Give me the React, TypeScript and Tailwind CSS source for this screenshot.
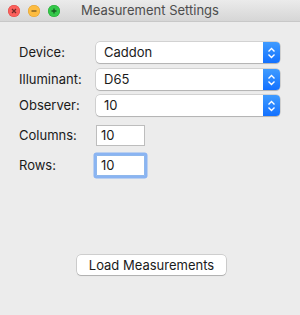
import React from 'react';

const font = { fontFamily: 'Inter, "Liberation Sans", Arial, sans-serif' };

const Stepper = () => (
  <div className="flex h-full w-[17px] shrink-0 items-center justify-center rounded-r-[4px] bg-gradient-to-b from-[#3f9bff] to-[#1270ff]">
    <svg width="9" height="12" viewBox="0 0 9 12" fill="none" stroke="#fff" strokeWidth="1.4">
      <path d="M1.5 4.5 L4.5 1.5 L7.5 4.5" />
      <path d="M1.5 7.5 L4.5 10.5 L7.5 7.5" />
    </svg>
  </div>
);

const Select = ({ value }: { value: string }) => (
  <div className="flex h-[21px] w-[184px] items-stretch rounded-[4px] bg-white shadow-[0_0_0_0.5px_rgba(0,0,0,0.22),0_1px_1px_rgba(0,0,0,0.15)]">
    <span className="flex-1 pl-[8px] text-[13px] leading-[21px] text-[#1a1a1a]">{value}</span>
    <Stepper />
  </div>
);

const Light = ({ color, border, sign }: { color: string; border: string; sign: string }) => (
  <div
    className="flex h-[12px] w-[12px] items-center justify-center rounded-full"
    style={{ background: color, boxShadow: `inset 0 0 0 0.5px ${border}` }}
  >
    <svg width="8" height="8" viewBox="0 0 8 8" stroke="rgba(0,0,0,0.55)" strokeWidth="1.3">
      {sign === 'x' && <path d="M2 2 L6 6 M6 2 L2 6" />}
      {sign === '-' && <path d="M1.5 4 L6.5 4" />}
      {sign === '+' && <path d="M1.5 4 L6.5 4 M4 1.5 L4 6.5" />}
    </svg>
  </div>
);

export default function App() {
  return (
    <div className="flex h-[315px] w-[300px] flex-col bg-[#ececec]" style={font}>
      <div className="relative flex h-[22px] shrink-0 items-center border-b border-[#c8c8c8] bg-gradient-to-b from-[#ebebeb] to-[#d6d6d6]">
        <div className="absolute left-[8px] top-[5px] flex gap-[8px]">
          <Light color="#fc605c" border="#de4a45" sign="x" />
          <Light color="#fdbc40" border="#dea034" sign="-" />
          <Light color="#34c84a" border="#27aa35" sign="+" />
        </div>
        <div className="w-full text-center text-[13px] text-[#4d4d4d]">Measurement Settings</div>
      </div>

      <div className="flex flex-col pl-[19px] pt-[20px] text-[13px] text-[#1a1a1a]">
        <div className="flex items-center">
          <span className="w-[77px]">Device:</span>
          <Select value="Caddon" />
        </div>
        <div className="mt-[6px] flex items-center">
          <span className="w-[77px]">Illuminant:</span>
          <Select value="D65" />
        </div>
        <div className="mt-[5px] flex items-center">
          <span className="w-[77px]">Observer:</span>
          <Select value="10" />
        </div>
        <div className="mt-[9px] flex items-center">
          <span className="w-[77px]">Columns:</span>
          <div className="h-[21px] w-[49px] border border-[#bdbdbd] bg-white pl-[4px] text-[13px] leading-[19px]">10</div>
        </div>
        <div className="mt-[9px] flex items-center">
          <span className="w-[77px]">Rows:</span>
          <div className="h-[21px] w-[49px] rounded-[1px] border border-[#8fb8ec] bg-white pl-[4px] text-[13px] leading-[19px] shadow-[0_0_0_2.5px_#8ab4f2]">10</div>
        </div>
      </div>

      <div className="mt-[79px] flex justify-center pl-[3px]">
        <button className="h-[20px] w-[149px] rounded-[4px] bg-white text-[13px] leading-[20px] text-[#1a1a1a] shadow-[0_0_0_0.5px_rgba(0,0,0,0.25),0_1px_1px_rgba(0,0,0,0.15)]">
          Load Measurements
        </button>
      </div>
    </div>
  );
}
